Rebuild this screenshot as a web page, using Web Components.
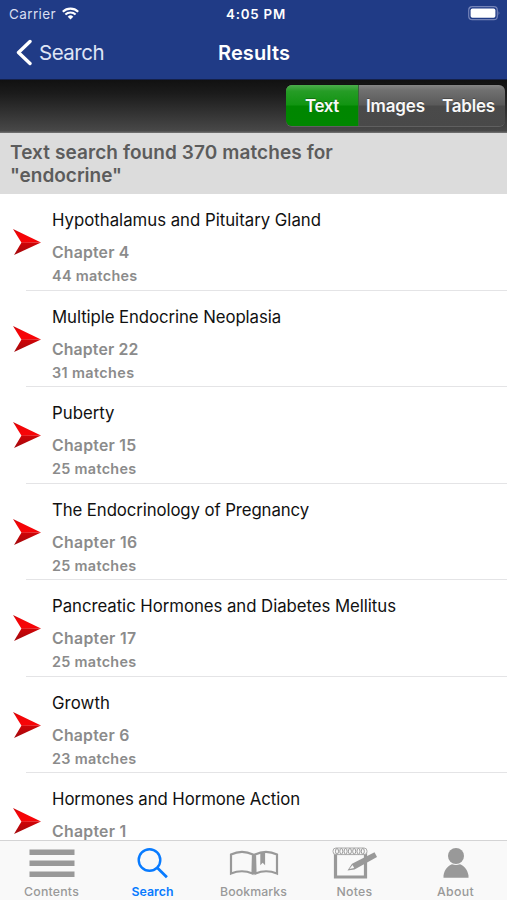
<!DOCTYPE html>
<html lang="en">
<head>
<meta charset="utf-8">
<title>Results</title>
<style>
html,body{margin:0;height:100%;overflow:hidden;background:#fff}
body{font-family:Inter,"Liberation Sans",sans-serif}
</style>
</head>
<body>
<results-app></results-app>
<script>
const define = (name, html, init) => {
  const tpl = document.createElement('template');
  tpl.innerHTML = html;
  customElements.define(name, class extends HTMLElement {
    connectedCallback() {
      if (this.shadowRoot) return;
      this.attachShadow({mode: 'open'}).append(tpl.content.cloneNode(true));
      if (init) init(this, this.shadowRoot);
    }
  });
};

// A single line of text whose tracking is set so that it spans the width "w".
define('fit-text', `<style>:host{display:inline-block;white-space:nowrap}</style><span><slot></slot></span>`, (el, root) => {
  const span = root.querySelector('span');
  const n = el.textContent.length;
  const natural = span.getBoundingClientRect().width;
  el.style.letterSpacing = ((+el.getAttribute('w') - natural) / n).toFixed(3) + 'px';
});

define('status-bar', `<style>
:host{display:grid;grid-template-columns:1fr auto 1fr;align-items:center;height:27px;padding:0 6px 0 9px;color:#fff;font-size:13.5px}
.l{display:flex;align-items:center;gap:6px;color:#d9def0}
.r{display:flex;justify-content:flex-end}
.t{font-weight:600;font-size:13.3px;padding-left:2px}
svg{display:block}
</style>
<div class="l"><fit-text w="47">Carrier</fit-text>
<svg width="17" height="13" viewBox="0 0 17 13" fill="none" stroke="#fff" stroke-width="2.1"><path d="M.8 4.8A11 11 0 0 1 16.2 4.8M3.4 7.6A7.4 7.4 0 0 1 13.6 7.6"/><path d="M5.7 9.7a4 4 0 0 1 5.6 0L8.5 12.6Z" fill="#fff" stroke="none"/></svg></div>
<div class="t"><fit-text w="60">4:05 PM</fit-text></div>
<div class="r"><svg width="33" height="15" viewBox="0 0 33 15"><rect x=".7" y=".7" width="28.6" height="13" rx="3.5" fill="none" stroke="#7483b8" stroke-width="1.2"/><rect x="2.6" y="2.6" width="24.8" height="9.2" rx="1.8" fill="#fff"/><path d="M30.6 5q1.8 2.2 0 4.4Z" fill="#8290c0"/></svg></div>`);

define('nav-bar', `<style>
:host{display:grid;grid-template-columns:1fr auto 1fr;align-items:center;height:51px;padding:0 15px;color:#fff}
.b{display:flex;align-items:center;gap:7px;font-size:20.5px;color:#dfe5f5}
.t{font-size:20px;font-weight:600;padding-left:1px}
svg{display:block}
</style>
<div class="b"><svg width="17" height="27" viewBox="0 0 17 27" fill="none" stroke="#fff" stroke-width="3.4" stroke-linecap="round" stroke-linejoin="round"><path d="M15 2.5 3.5 13.5 15 24.5"/></svg><fit-text w="65">Search</fit-text></div>
<div class="t"><fit-text w="72">Results</fit-text></div><span></span>`);

define('segment-bar', `<style>
:host{display:flex;justify-content:flex-end;box-sizing:border-box;height:54px;padding:5px 2px 0 0;background:linear-gradient(#111 0,#1b1b1b 25%,#484848 96%,#777 100%);border-top:1px solid #14204a}
.g{display:grid;grid-template-columns:73px 73px 73px;height:41px;border-radius:6px;overflow:hidden;box-shadow:0 1px 0 #606060,0 -1px 0 #111;background:linear-gradient(#858585 0,#707070 12%,#5a5a5a 49%,#4a4a4a 51%,#494949 100%);color:#f8f8f8;font-weight:600;font-size:17px}
.g div{display:flex;align-items:center;justify-content:center;text-shadow:0 -1px 0 #0004}
.on{background:linear-gradient(#4cac4c 0,#269c26 15%,#119411 49%,#008600 51%,#008700 100%);border-right:1px solid #3b613b;box-sizing:border-box}
</style>
<div class="g"><div class="on"><fit-text w="34">Text</fit-text></div><div><fit-text w="59">Images</fit-text></div><div><fit-text w="53">Tables</fit-text></div></div>`);

define('result-summary', `<style>
:host{display:flex;flex-direction:column;box-sizing:border-box;height:61px;padding:8px 10px 0;background:#dcdcdc;color:#5c5c5c;font-size:19px;font-weight:600;line-height:23px}
fit-text{align-self:flex-start}
</style><fit-text w="323">Text search found 370 matches for</fit-text><fit-text w="112">"endocrine"</fit-text>`);

define('result-row', `<style>
:host{display:grid;grid-template-columns:52px 1fr;height:96.5px;box-sizing:border-box;padding-top:6px;position:relative;color:#111}
:host::after{content:"";position:absolute;left:26px;right:0;bottom:0;height:1px;background:#e4e4e6}
svg{display:block;margin:28px 0 0 12px}
.n{line-height:41px;font-size:16.8px}
.c,.m{line-height:24px;color:#8b8b8b;font-weight:600}
.c{font-size:15.8px}.m{font-size:14.4px;line-height:22.5px}
</style>
<svg width="30" height="28" viewBox="0 0 30 28"><defs><linearGradient id="u" x2="0" y2="1"><stop offset="0" stop-color="#c40508"/><stop offset=".35" stop-color="#f30508"/><stop offset="1" stop-color="#f80407"/></linearGradient><linearGradient id="d" x2="0" y2="1"><stop offset="0" stop-color="#d20306"/><stop offset="1" stop-color="#a00a0e"/></linearGradient></defs><path d="M1 1 29 14.4 9.5 14.8Z" fill="url(#u)"/><path d="M29 14.4 2 27 9.5 14.4Z" fill="url(#d)"/></svg>
<div><div class="n"></div><div class="c"></div><div class="m"></div></div>`, (el, root) => {
  for (const [cls, key] of [['n','name'],['c','chapter'],['m','matches']]) {
    if (!el.dataset[key]) continue;
    const [text, w] = el.dataset[key].split('|');
    const f = document.createElement('fit-text');
    f.setAttribute('w', w);
    f.textContent = text;
    root.querySelector('.' + cls).append(f);
  }
});

define('tab-item', `<style>
:host{display:flex;flex-direction:column;align-items:center;color:#999;font-size:12.3px;font-weight:500}
:host([active]){color:#087bff;font-weight:600}
.i{height:44px;display:flex;align-items:center}
.l{line-height:14px}
</style><div class="i"><slot name="icon"></slot></div><div class="l"><slot></slot></div>`);

define('tab-bar', `<style>
:host{display:grid;grid-template-columns:repeat(5,1fr);height:60px;background:#f9f9f9;border-top:1px solid #d4d4d5;position:relative;padding:0 1px;box-sizing:border-box}
svg{display:block}
</style>
<tab-item><svg slot="icon" width="46" height="30" viewBox="0 0 46 30" fill="#999"><path d="M.5 1.5h45v5.5H.5zM.5 12.5h45v5.5H.5zM.5 23.5h45v5.5H.5z"/></svg><fit-text w="55">Contents</fit-text></tab-item>
<tab-item active><svg slot="icon" width="32" height="32" viewBox="0 0 32 32" fill="none" stroke="#087bff"><circle cx="12.5" cy="13" r="10.8" stroke-width="2.4"/><path d="m20 20.5 9.9 9.7" stroke-width="2.8"/></svg><fit-text w="42">Search</fit-text></tab-item>
<tab-item><svg slot="icon" width="50" height="26" viewBox="0 0 50 26" fill="none" stroke="#999" stroke-width="2.2"><path d="M24 4.5Q13-.8 2 4.5V23.5Q13 19 23.5 23.5ZM26 4.5Q37-.8 48 4.5V23.5Q37 19 26.5 23.5ZM25 4V24"/><path d="M31.3 2.5h4.8v12.7l-2.4-2.5-2.4 2.5Z" fill="#999" stroke="none"/></svg><fit-text w="67">Bookmarks</fit-text></tab-item>
<tab-item><svg slot="icon" width="46" height="34" viewBox="0 0 46 34"><path d="M3.5 6v25h30V6" fill="none" stroke="#999" stroke-width="3.2"/><rect x="1" y="2" width="34" height="6.6" rx="3" fill="#f9f9f9" stroke="#aaa" stroke-width="1"/><g fill="none" stroke="#999" stroke-width="1"><ellipse cx="5" cy="5.3" rx="1.5" ry="2.8"/><ellipse cx="9.3" cy="5.3" rx="1.5" ry="2.8"/><ellipse cx="13.6" cy="5.3" rx="1.5" ry="2.8"/><ellipse cx="17.9" cy="5.3" rx="1.5" ry="2.8"/><ellipse cx="22.2" cy="5.3" rx="1.5" ry="2.8"/><ellipse cx="26.5" cy="5.3" rx="1.5" ry="2.8"/><ellipse cx="30.8" cy="5.3" rx="1.5" ry="2.8"/></g><path d="M15.5 24.5 20 17.8 42.5 6.3 45 11 22.5 23.5Z" fill="#999"/><path d="m17.3 23 3.3-4.1 1.5 3.2Z" fill="#f9f9f9"/></svg><fit-text w="36">Notes</fit-text></tab-item>
<tab-item><svg slot="icon" width="28" height="32" viewBox="0 0 28 32" fill="#999"><circle cx="14" cy="9" r="8"/><path d="M1.5 30.8V28.5C2.5 22 7 18 10 17.3q4 1.6 8 0C21 18 25.5 22 26.5 28.5v2.3Z"/></svg><fit-text w="37">About</fit-text></tab-item>`);

define('results-app', `<style>
:host{display:flex;flex-direction:column;width:507px;height:900px;background:#fff;overflow:hidden}
header{height:79px;background:#203b86;flex:none}
main{flex:1;min-height:0;overflow:hidden}
segment-bar,result-summary,tab-bar{flex:none}
</style>
<header><status-bar></status-bar><nav-bar></nav-bar></header>
<segment-bar></segment-bar>
<result-summary></result-summary>
<main>
<result-row data-name="Hypothalamus and Pituitary Gland|269" data-chapter="Chapter 4|77.5" data-matches="44 matches|85.5"></result-row>
<result-row data-name="Multiple Endocrine Neoplasia|229" data-chapter="Chapter 22|86.5" data-matches="31 matches|82.5"></result-row>
<result-row data-name="Puberty|62.5" data-chapter="Chapter 15|84.5" data-matches="25 matches|84.5"></result-row>
<result-row data-name="The Endocrinology of Pregnancy|257" data-chapter="Chapter 16|85.5" data-matches="25 matches|84.5"></result-row>
<result-row data-name="Pancreatic Hormones and Diabetes Mellitus|344" data-chapter="Chapter 17|84.5" data-matches="25 matches|84.5"></result-row>
<result-row data-name="Growth|58" data-chapter="Chapter 6|77.5" data-matches="23 matches|84.5"></result-row>
<result-row data-name="Hormones and Hormone Action|248" data-chapter="Chapter 1|74.5"></result-row>
</main>
<tab-bar></tab-bar>`);
</script>
</body>
</html>
